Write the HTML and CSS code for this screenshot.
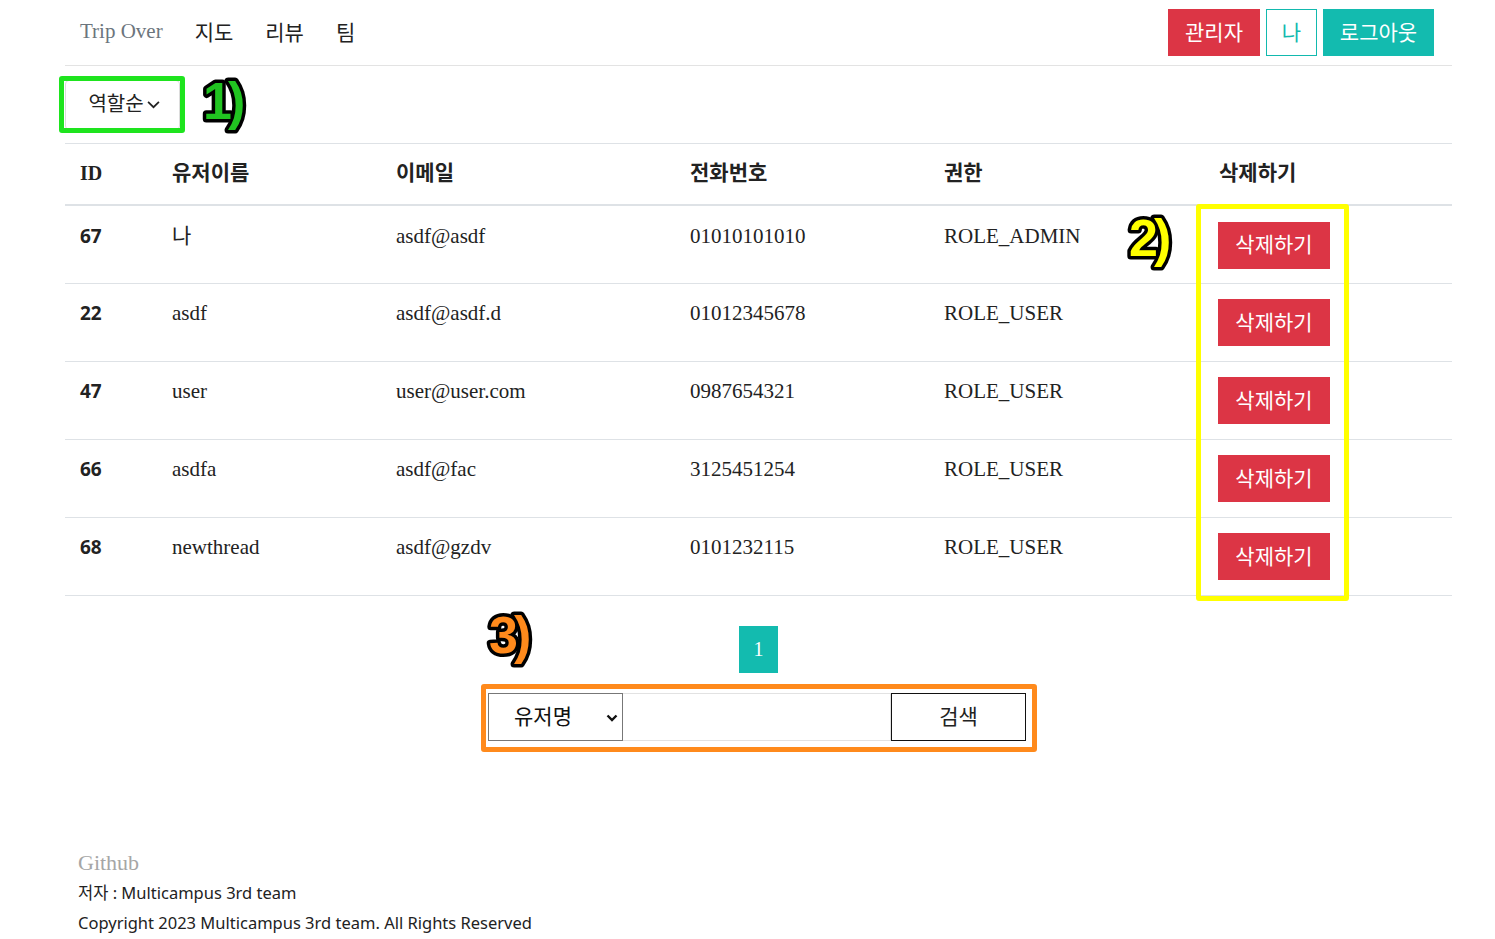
FILE: index.html
```html
<!DOCTYPE html>
<html lang="ko">
<head>
<meta charset="utf-8">
<title>Trip Over - 관리자</title>
<link rel="stylesheet" href="styles.css">
</head>
<body>
<div class="page">
  <header class="topbar">
    <nav class="nav">
      <a class="brand">Trip Over</a>
      <a class="nav-link">지도</a>
      <a class="nav-link">리뷰</a>
      <a class="nav-link">팀</a>
    </nav>
    <div class="actions">
      <button class="btn btn-red">관리자</button>
      <button class="btn btn-outline">나</button>
      <button class="btn btn-teal">로그아웃</button>
    </div>
  </header>

  <div class="toolbar">
    <div class="sort-wrap">
      <button class="sort"><span>역할순</span><svg class="chev" viewBox="0 0 12 8" width="13" height="9"><path d="M1 1.5 L6 6.5 L11 1.5" fill="none" stroke="#222" stroke-width="1.6"/></svg></button>
      <span class="note note-green"></span>
      <svg class="label label-1" width="60" height="60" viewBox="0 0 60 60"><text x="2" y="47" class="lbl" fill="#21c421">1)</text></svg>
    </div>
  </div>

  <div class="table-wrap">
    <table class="users">
      <colgroup>
        <col class="c1"><col class="c2"><col class="c3"><col class="c4"><col class="c5"><col class="c6">
      </colgroup>
      <thead>
        <tr><th class="id-h">ID</th><th>유저이름</th><th>이메일</th><th>전화번호</th><th>권한</th><th>삭제하기</th></tr>
      </thead>
      <tbody>
        <tr><td class="id">67</td><td>나</td><td>asdf@asdf</td><td>01010101010</td><td>ROLE_ADMIN</td><td><button class="del">삭제하기</button></td></tr>
        <tr><td class="id">22</td><td>asdf</td><td>asdf@asdf.d</td><td>01012345678</td><td>ROLE_USER</td><td><button class="del">삭제하기</button></td></tr>
        <tr><td class="id">47</td><td>user</td><td>user@user.com</td><td>0987654321</td><td>ROLE_USER</td><td><button class="del">삭제하기</button></td></tr>
        <tr><td class="id">66</td><td>asdfa</td><td>asdf@fac</td><td>3125451254</td><td>ROLE_USER</td><td><button class="del">삭제하기</button></td></tr>
        <tr><td class="id">68</td><td>newthread</td><td>asdf@gzdv</td><td>0101232115</td><td>ROLE_USER</td><td><button class="del">삭제하기</button></td></tr>
      </tbody>
    </table>
    <span class="note note-yellow"></span>
    <svg class="label label-2" width="60" height="60" viewBox="0 0 60 60"><text x="2" y="47" class="lbl" fill="#ffff00">2)</text></svg>
  </div>

  <div class="pager"><span class="page-num">1</span></div>

  <div class="search-wrap">
    <form class="search">
      <div class="select-box"><span>유저명</span><svg viewBox="0 0 12 8" width="12" height="8"><path d="M1.5 1.5 L6 6 L10.5 1.5" fill="none" stroke="#111" stroke-width="2.4"/></svg></div>
      <input class="query" type="text">
      <button class="go" type="button">검색</button>
    </form>
    <span class="note note-orange"></span>
    <svg class="label label-3" width="60" height="60" viewBox="0 0 60 60"><text x="2" y="47" class="lbl" fill="#ff8a1c">3)</text></svg>
  </div>

  <footer class="footer">
    <div class="gh">Github</div>
    <div class="ft">저자 : Multicampus 3rd team</div>
    <div class="ft">Copyright 2023 Multicampus 3rd team. All Rights Reserved</div>
  </footer>
</div>
</body>
</html>
```

FILE: styles.css
```css
* { box-sizing: border-box; }
body {
  margin: 0;
  background: #fff;
  color: #212529;
  font-family: "Liberation Serif", "Noto Sans CJK KR", serif;
}
.page {
  margin-left: 65px;
  width: 1387px;
}
.topbar {
  height: 66px;
  display: flex;
  align-items: center;
  justify-content: space-between;
  border-bottom: 1px solid #e3e3e3;
  padding-right: 18px;
}
.nav {
  display: flex;
  align-items: center;
  padding-left: 15px;
  padding-bottom: 3px;
}
.brand {
  font-family: "Liberation Serif", serif;
  font-size: 21px;
  color: #6c757d;
  margin-right: 32px;
}
.nav-link {
  font-family: "Noto Sans CJK KR", sans-serif;
  font-size: 21px;
  color: #222;
  margin-right: 32px;
}
.actions { display: flex; gap: 6px; }
.btn {
  height: 47px;
  border: 0;
  font-family: "Noto Sans CJK KR", sans-serif;
  font-size: 21px;
  color: #fff;
  padding: 0 0 4px;
}
.btn-red { background: #dc3545; width: 92px; }
.btn-outline { background: #fff; border: 1px solid #12b9ae; color: #12b9ae; width: 51px; }
.btn-teal { background: #13bbaf; width: 111px; }

.toolbar {
  height: 77px;
  padding-top: 14px;
}
.sort-wrap { position: relative; width: 120px; }
.sort {
  width: 115px;
  height: 50px;
  border: 1px solid #dcdcdc;
  border-radius: 4px;
  background: #fff;
  font-family: "Noto Sans CJK KR", sans-serif;
  font-size: 20px;
  color: #222;
  display: flex;
  align-items: center;
  justify-content: center;
  gap: 3px;
  padding: 0 0 5px 3px;
}
.sort .chev { margin-top: 3px; }
.note { position: absolute; pointer-events: none; border-radius: 3px; }
.note-green { left: -6px; top: -4px; width: 126px; height: 57px; border: 5px solid #1ee41e; }
.label { position: absolute; overflow: visible; }
.lbl {
  font-family: "Liberation Sans", sans-serif;
  font-weight: 700;
  font-size: 52px;
  stroke: #000;
  stroke-width: 7px;
  paint-order: stroke;
  stroke-linejoin: round;
  letter-spacing: -4px;
}
.label-1 { left: 136px; top: -8px; }

.table-wrap { position: relative; }
.users {
  width: 1387px;
  border-collapse: collapse;
  table-layout: fixed;
  border-top: 1px solid #dee2e6;
}
.c1 { width: 92px; } .c2 { width: 224px; } .c3 { width: 294px; }
.c4 { width: 254px; } .c5 { width: 275px; } .c6 { width: 248px; }
.users th {
  text-align: left;
  font-family: "Noto Sans CJK KR", sans-serif;
  font-weight: 700;
  font-size: 21px;
  color: #222;
  height: 61px;
  padding: 0 15px 5px;
  border-bottom: 2px solid #dee2e6;
}
.users th.id-h { font-family: "Liberation Serif", serif; font-size: 20px; padding-bottom: 0; }
.users td {
  vertical-align: top;
  padding: 14px 15px 0;
  height: 78px;
  font-size: 21px;
  line-height: 30px;
  color: #222;
  border-bottom: 1px solid #dee2e6;
}
.users tbody tr:first-child td { height: 79px; padding-top: 15px; }
.users td.id {
  font-family: "Noto Sans", sans-serif;
  font-weight: 700;
  font-size: 19px;
}
.del {
  display: block;
  width: 112px;
  height: 47px;
  margin-top: 1px;
  margin-left: -1px;
  border: 0;
  background: #dc3545;
  color: #fff;
  font-family: "Noto Sans CJK KR", sans-serif;
  font-size: 21px;
  padding: 0 0 4px;
}
.note-yellow { left: 1131px; top: 61px; width: 153px; height: 397px; border: 5px solid #ffff00; }
.label-2 { left: 1062px; top: 66px; }

.pager {
  display: flex;
  justify-content: center;
  padding-top: 30px;
}
.page-num {
  width: 39px;
  height: 47px;
  background: #13bbaf;
  color: #fff;
  font-size: 20px;
  display: flex;
  align-items: center;
  justify-content: center;
}
.search-wrap {
  position: relative;
  display: flex;
  justify-content: center;
  padding-top: 20px;
  padding-right: 3px;
}
.search { display: flex; height: 48px; }
.select-box {
  width: 135px;
  height: 48px;
  border: 1px solid #777;
  display: flex;
  align-items: center;
  justify-content: space-between;
  padding: 0 4px 4px 25px;
  font-family: "Noto Sans CJK KR", sans-serif;
  font-size: 21px;
  color: #111;
}
.select-box svg { margin-top: 5px; }
.query {
  width: 268px;
  height: 48px;
  border: 1px solid #e2e2e2;
  border-left: 0;
  margin: 0;
}
.go {
  width: 135px;
  height: 48px;
  background: #fff;
  border: 1px solid #111;
  font-family: "Noto Sans CJK KR", sans-serif;
  font-size: 21px;
  color: #222;
  padding: 0 0 4px;
}
.note-orange { left: 416px; top: 11px; width: 556px; height: 68px; border: 5px solid #ff8a1c; }
.label-3 { left: 422px; top: -67px; }

.footer {
  padding: 107px 0 0 13px;
}
.gh {
  font-family: "Liberation Serif", serif;
  font-size: 22px;
  color: #a6a6a6;
  line-height: 30px;
}
.ft {
  font-family: "Noto Sans", "Noto Sans CJK KR", sans-serif;
  font-size: 16.5px;
  color: #222;
  line-height: 30px;
}
```
